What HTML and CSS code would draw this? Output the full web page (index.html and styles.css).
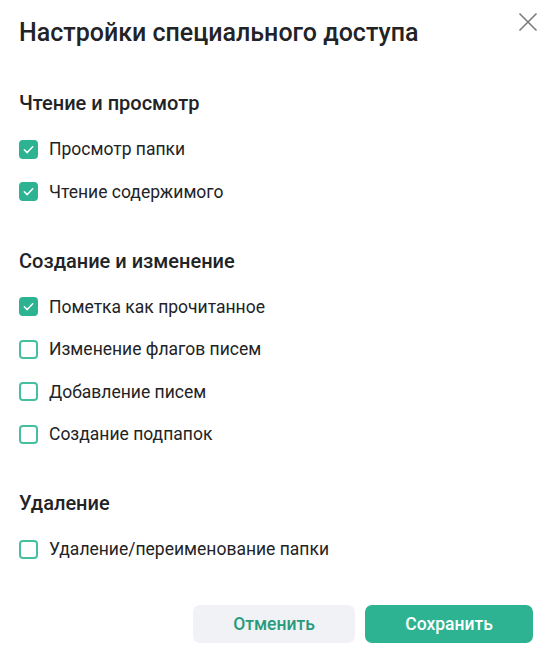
FILE: index.html
```html
<!DOCTYPE html>
<html lang="ru">
<head>
<meta charset="utf-8">
<title>Настройки специального доступа</title>
<link rel="stylesheet" href="styles.css">
</head>
<body>
<div class="dialog">
  <div class="header">
    <h1 class="title">Настройки специального доступа</h1>
    <button class="close" aria-label="Закрыть">
      <svg width="24" height="24" viewBox="0 0 24 24"><path d="M3.5 3.5 L20.5 20.5 M20.5 3.5 L3.5 20.5" stroke="#7b7b7b" stroke-width="1.6" fill="none"/></svg>
    </button>
  </div>

  <section class="section first">
    <h2 class="section-title">Чтение и просмотр</h2>
    <ul class="list">
      <li class="item"><span class="box checked"><svg width="19" height="19" viewBox="0 0 19 19"><path d="M5.3 9.7 L8.2 12.6 L13.7 6.8" stroke="#fff" stroke-width="1.5" fill="none" stroke-linecap="round" stroke-linejoin="round"/></svg></span>Просмотр папки</li>
      <li class="item"><span class="box checked"><svg width="19" height="19" viewBox="0 0 19 19"><path d="M5.3 9.7 L8.2 12.6 L13.7 6.8" stroke="#fff" stroke-width="1.5" fill="none" stroke-linecap="round" stroke-linejoin="round"/></svg></span>Чтение содержимого</li>
    </ul>
  </section>

  <section class="section">
    <h2 class="section-title">Создание и изменение</h2>
    <ul class="list">
      <li class="item"><span class="box checked"><svg width="19" height="19" viewBox="0 0 19 19"><path d="M5.3 9.7 L8.2 12.6 L13.7 6.8" stroke="#fff" stroke-width="1.5" fill="none" stroke-linecap="round" stroke-linejoin="round"/></svg></span>Пометка как прочитанное</li>
      <li class="item"><span class="box"></span>Изменение флагов писем</li>
      <li class="item"><span class="box"></span>Добавление писем</li>
      <li class="item"><span class="box"></span>Создание подпапок</li>
    </ul>
  </section>

  <section class="section">
    <h2 class="section-title">Удаление</h2>
    <ul class="list">
      <li class="item"><span class="box"></span>Удаление/переименование папки</li>
    </ul>
  </section>

  <div class="footer">
    <button class="btn btn-cancel">Отменить</button>
    <button class="btn btn-save">Сохранить</button>
  </div>
</div>
</body>
</html>
```

FILE: styles.css
```css
html, body {
  margin: 0;
  padding: 0;
  background: #ffffff;
}

body {
  font-family: Roboto, "Liberation Sans", Arial, sans-serif;
  color: #222326;
}

.dialog {
  padding: 17px 18px 7px 19px;
}

.header {
  display: flex;
  justify-content: space-between;
  align-items: flex-start;
}

.title {
  margin: 0;
  font-size: 25px;
  font-weight: 500;
  line-height: 32px;
  color: #222326;
}

.close {
  width: 24px;
  height: 24px;
  margin: -7px -7px 0 0;
  padding: 0;
  border: 0;
  background: transparent;
  display: flex;
}

.section {
  margin-top: 45px;
}

.section.first {
  margin-top: 42px;
}

.section-title {
  margin: 0;
  font-size: 20px;
  font-weight: 500;
  line-height: 24px;
  color: #222326;
}

.list {
  list-style: none;
  margin: 22px 0 0;
  padding: 0;
  display: flex;
  flex-direction: column;
  gap: 18.5px;
}

.item {
  display: flex;
  align-items: center;
  height: 24px;
  font-size: 17.5px;
  line-height: 24px;
  color: #222326;
}

.box {
  box-sizing: border-box;
  width: 19px;
  height: 19px;
  border: 2px solid #45bf9f;
  border-radius: 4px;
  margin-right: 11px;
  display: flex;
  align-items: center;
  justify-content: center;
  flex: none;
}

.box.checked {
  background: #2db392;
  border-color: #2db392;
}

.box svg {
  flex: none;
  margin: -2px;
}

.footer {
  margin-top: 44px;
  display: flex;
  justify-content: flex-end;
  gap: 10px;
}

.btn {
  height: 38px;
  border: 0;
  border-radius: 7px;
  font-family: Roboto, "Liberation Sans", Arial, sans-serif;
  font-size: 17.5px;
  font-weight: 500;
  padding: 0;
}

.btn-cancel {
  width: 162px;
  background: #f0f2f5;
  color: #279a7d;
}

.btn-save {
  width: 168px;
  background: #2db392;
  color: #ffffff;
}
```
